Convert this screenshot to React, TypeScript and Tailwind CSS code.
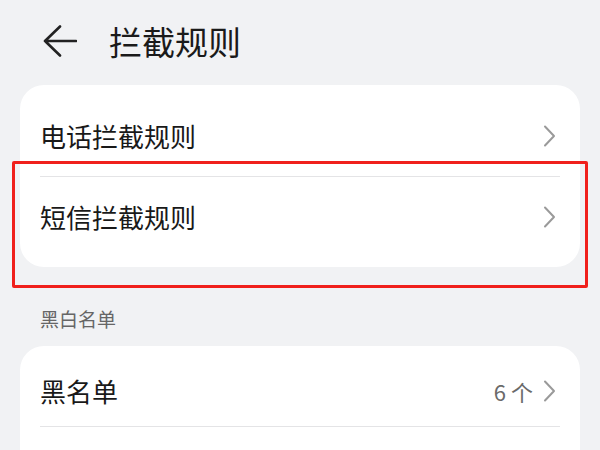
import React from 'react';

/** 설정 목록 행 — 레이블 + (선택) 값 + 오른쪽 화살표 */
type RowProps = { label: string; value?: string; height: string; divider?: boolean };

function Chevron() {
  return (
    <svg width="13" height="22" viewBox="0 0 13 22" fill="none" className="shrink-0">
      <path d="M2 1.5 L11 11 L2 20.5" stroke="#9a9a9a" strokeWidth="2" strokeLinecap="round" strokeLinejoin="round" />
    </svg>
  );
}

function Row({ label, value, height, divider }: RowProps) {
  return (
    <div className="relative">
      <div className={`flex items-center justify-between pl-5 pr-[24px] ${height}`}>
        <span className="text-[26px] leading-none text-[#191919]">{label}</span>
        <div className="flex items-center gap-[10px]">
          {value && <span className="text-[22px] leading-none text-[#6a6a6a]">{value}</span>}
          <Chevron />
        </div>
      </div>
      {/* 행 사이 구분선 */}
      {divider && <div className="mx-5 h-px bg-[#e4e4e6]" />}
    </div>
  );
}

export default function App() {
  return (
    <div
      className="w-[600px] h-[450px] overflow-hidden bg-[#f1f2f4]"
      style={{ fontFamily: '"Noto Sans CJK SC", "Noto Sans", sans-serif' }}
    >
      {/* 상단 헤더 */}
      <div className="flex items-center h-[82px] pl-[43px] gap-[32px]">
        <svg width="34" height="32" viewBox="0 0 34 32" fill="none">
          <path d="M17 1.5 L2 16 L17 30.5 M2 16 H33" stroke="#222" strokeWidth="2.6" strokeLinecap="round" strokeLinejoin="round" />
        </svg>
        <span className="text-[33px] leading-none text-[#1a1a1a]">拦截规则</span>
      </div>

      <div className="px-5 mt-[3px]">
        {/* 규칙 카드 */}
        <div className="relative">
          <div className="bg-white rounded-[24px] pt-[11px] pb-[11px]">
            <Row label="电话拦截规则" height="h-[80px]" divider />
            <Row label="短信拦截规则" height="h-[79px]" />
          </div>
          {/* 강조 표시용 빨간 테두리 */}
          <div className="absolute left-[-8px] right-[-8px] top-[76px] bottom-[-21px] border-[3px] border-[#f0201c] rounded-[2px] pointer-events-none" />
        </div>

        {/* 섹션 제목 */}
        <div className="flex items-end h-[79px] pb-[14px] pl-5">
          <span className="text-[19px] leading-[26px] text-[#666666]">黑白名单</span>
        </div>

        {/* 흑백 명단 카드 — 다음 행은 화면 아래로 잘림 */}
        <div className="bg-white rounded-t-[24px] pt-[10px] h-[120px]">
          <Row label="黑名单" value="6 个" height="h-[70px]" divider />
        </div>
      </div>
    </div>
  );
}
